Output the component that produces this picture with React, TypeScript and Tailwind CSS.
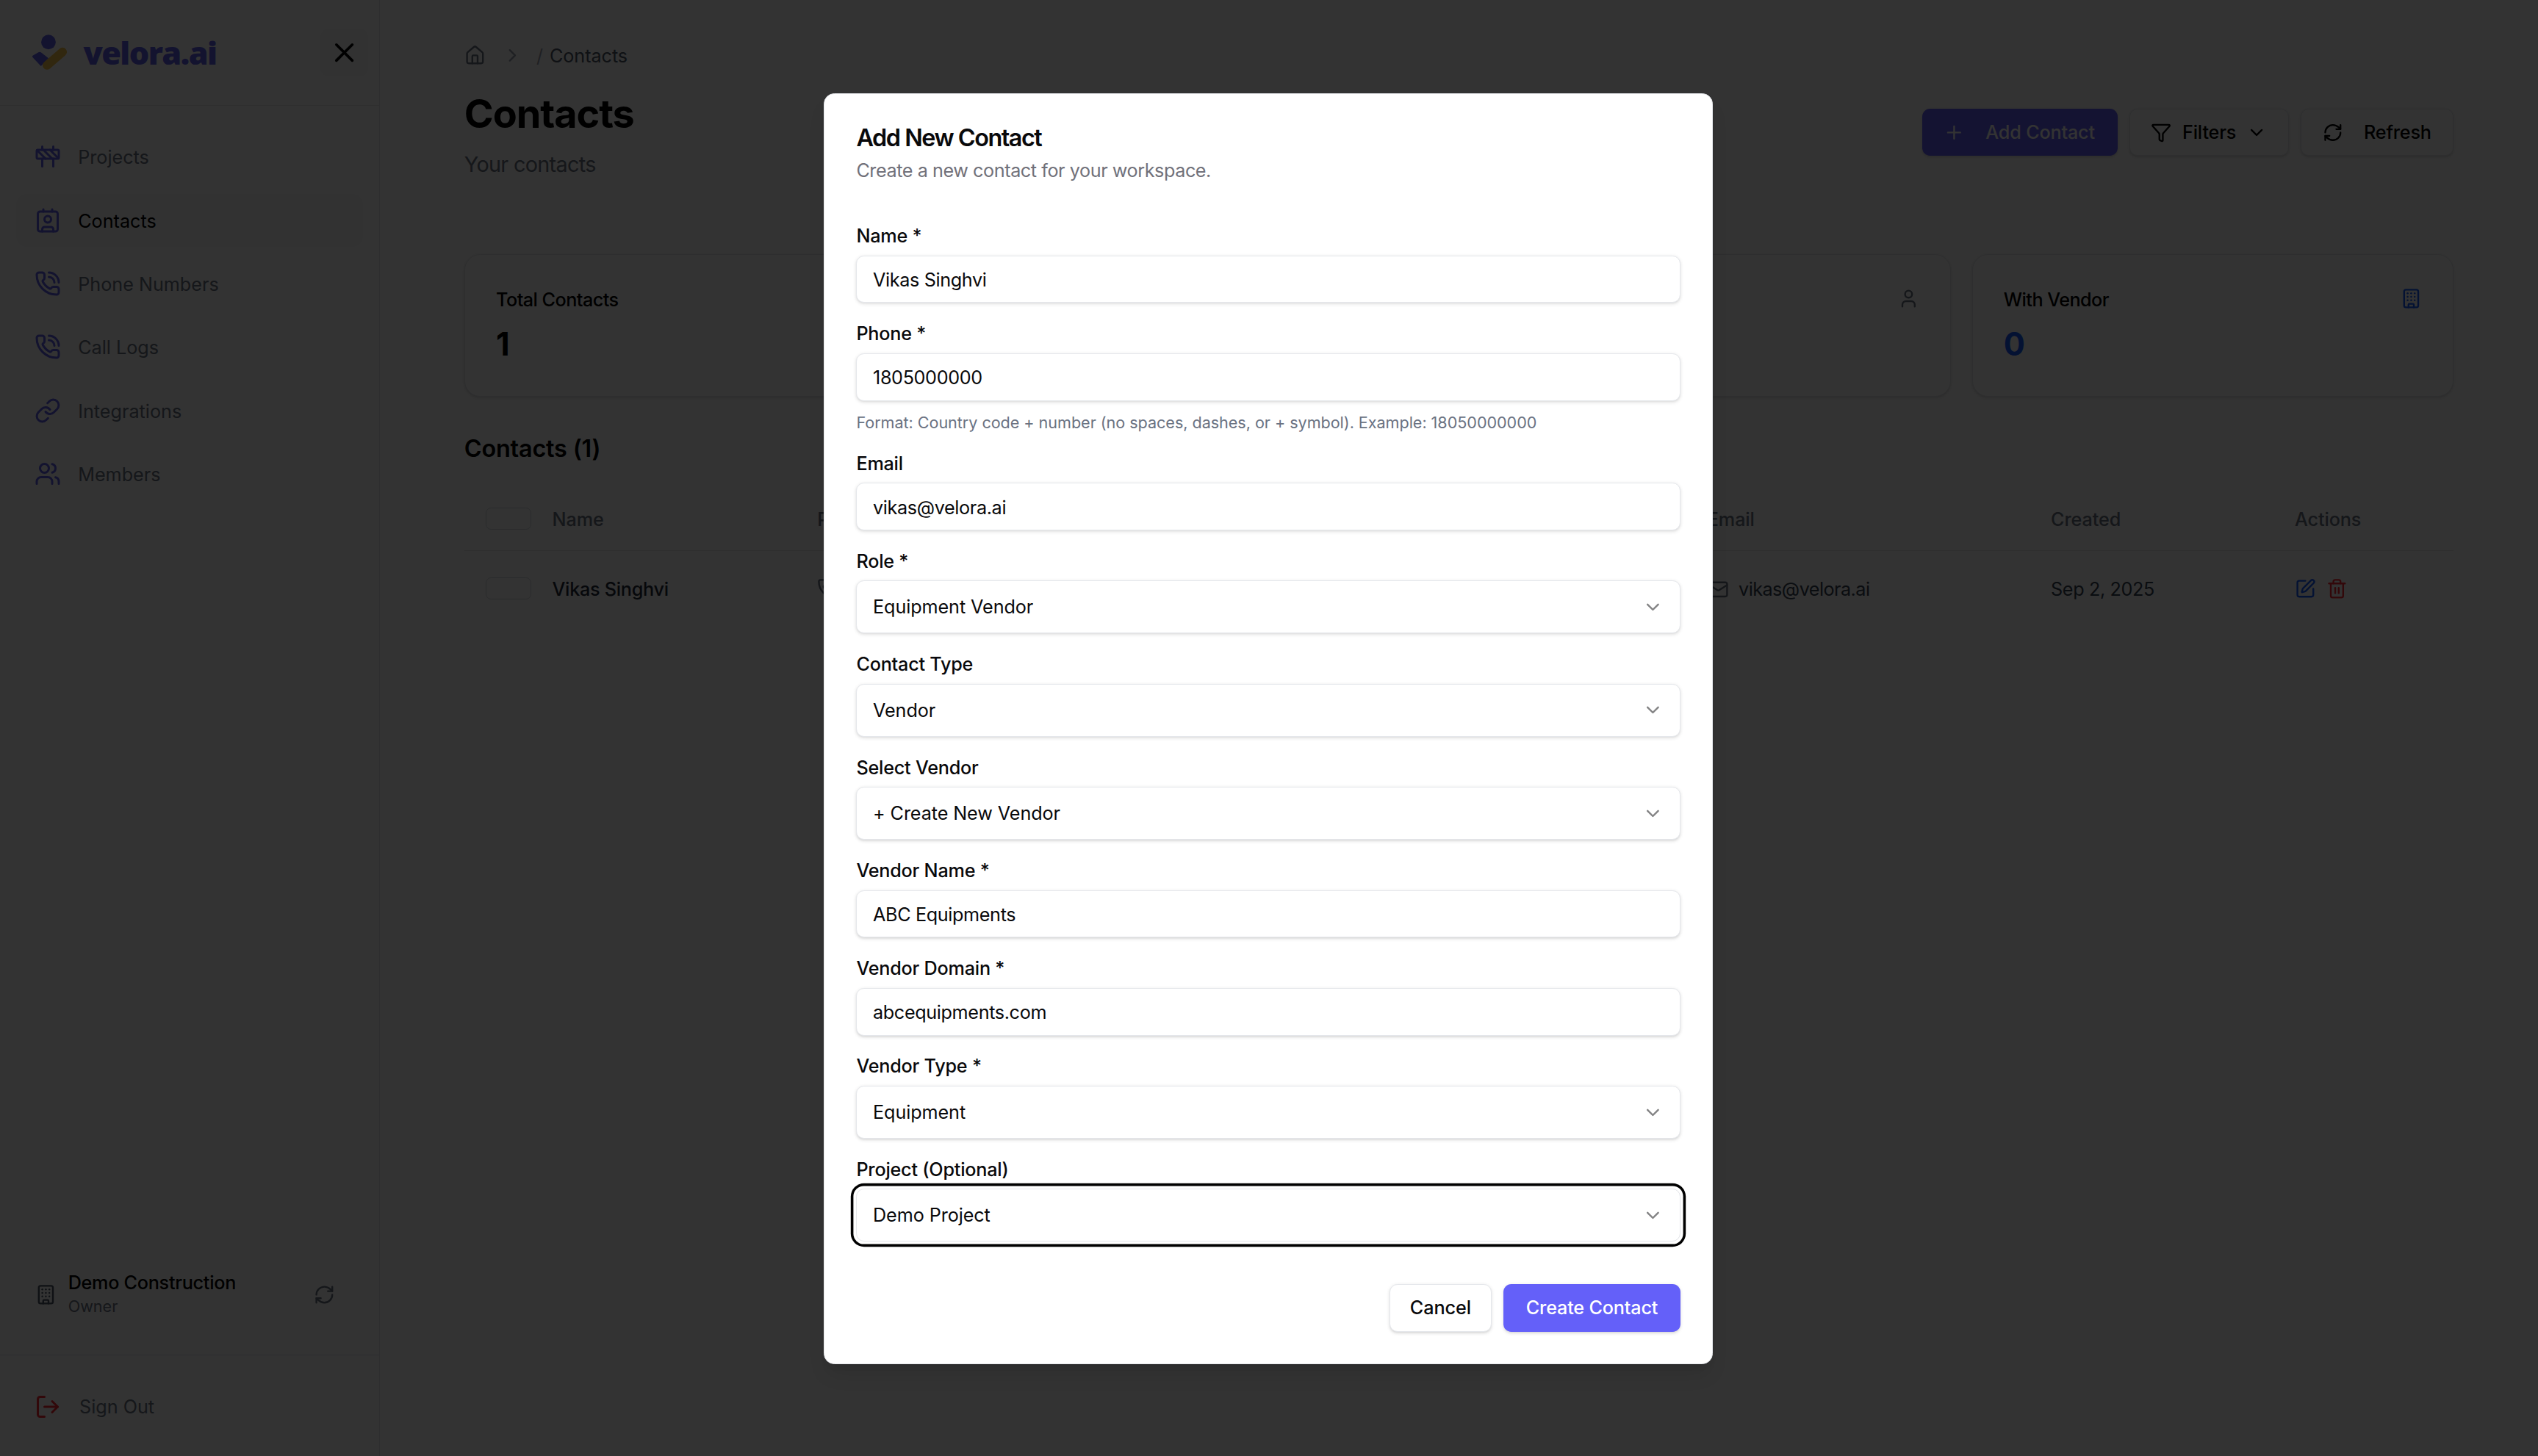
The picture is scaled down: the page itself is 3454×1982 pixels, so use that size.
import React from "react";
import {
  X, Construction, Contact, PhoneCall, Link, Users, Building, RefreshCw, LogOut, Home,
  ChevronRight, ChevronDown, Plus, Funnel, User, Phone, Mail, SquarePen, Trash2,
} from "lucide-react";

const nav = [
  { label: "Projects", Icon: Construction },
  { label: "Contacts", Icon: Contact, active: true },
  { label: "Phone Numbers", Icon: PhoneCall },
  { label: "Call Logs", Icon: PhoneCall },
  { label: "Integrations", Icon: Link },
  { label: "Members", Icon: Users },
];

function Logo() {
  return (
    <svg viewBox="72 80 157 150" className="w-[29px] h-[27.5px] shrink-0">
      <circle cx="141" cy="111" r="30" fill="#5f5fe8" />
      <path d="M75 173 Q72 170 77 166 L101 153 Q106 151 111 154 L141 178 L110 210 Z" fill="#5f5fe8" />
      <path d="M135 207 L199 152" stroke="#f5c04a" strokeWidth="36" strokeLinecap="round" fill="none" />
    </svg>
  );
}

function Sidebar() {
  return (
    <aside className="w-[287px] h-full shrink-0 border-r border-gray-200 flex flex-col">
      <div className="h-20 shrink-0 border-b border-gray-200 flex items-center justify-between pl-6 pr-2">
        <div className="flex items-center gap-[10px]">
          <Logo />
          <span className="text-[24px] font-extrabold leading-none tracking-[-0.87px] text-[#5f5fe8] [font-family:'Open_Sans',sans-serif]">velora.ai</span>
        </div>
        <button className="w-9 h-9 rounded-md bg-gray-50 flex items-center justify-center text-black">
          <X size={24} strokeWidth={2} />
        </button>
      </div>
      <nav className="flex flex-col gap-2 px-3 pt-[18.5px]">
        {nav.map(({ label, Icon, active }) => (
          <div key={label} className={`h-10 rounded-lg px-3.5 flex items-center gap-[13px] text-sm ${active ? "bg-gray-50 text-black" : "text-gray-500"}`}>
            <Icon size={20} className="text-[#5f5fe8] shrink-0" />
            <span className="pt-[1px]">{label}</span>
          </div>
        ))}
      </nav>
      <div className="mt-auto">
        <div className="flex items-center pl-[26.5px] pr-[33px] pb-[27.3px]">
          <Building size={16} className="text-gray-600 shrink-0" />
          <div className="ml-[9px] flex-1">
            <div className="text-sm leading-[18px] font-medium tracking-[-0.15px] text-black">Demo Construction</div>
            <div className="text-xs leading-[18px] text-gray-500">Owner</div>
          </div>
          <RefreshCw size={16} className="text-gray-500 shrink-0" />
        </div>
        <div className="border-t border-gray-200 px-3 pt-[19px] pb-[17px]">
          <div className="h-10 px-3.5 flex items-center gap-3.5 text-sm text-gray-500">
            <LogOut size={20} className="text-red-500 shrink-0" />
            <span>Sign Out</span>
          </div>
        </div>
      </div>
    </aside>
  );
}

function StatCard({ label, value, icon, valueClass }: { label: string; value: string; icon?: React.ReactNode; valueClass: string }) {
  return (
    <div className="rounded-xl border border-gray-200 bg-white shadow-sm px-[23.5px] py-[23px]">
      <div className="flex items-center justify-between h-5">
        <span className="text-sm font-medium tracking-[-0.3px] text-black pt-[1px]">{label}</span>
        {icon}
      </div>
      <div className={`mt-[8.5px] text-2xl leading-8 font-bold ${valueClass}`}>{value}</div>
    </div>
  );
}

const cols = "grid grid-cols-[50.5px_200.5px_673px_259.6px_184.4px_1fr] items-center";

function Checkbox() {
  return <div className="w-[34.5px] h-[17px] rounded-[4px] border border-gray-300" />;
}

function Main() {
  return (
    <main className="flex-1 min-w-0 px-16 pt-[32px]">
      <div className="flex items-center h-5 text-sm text-gray-600">
        <Home size={16} className="text-gray-500" />
        <ChevronRight size={16} className="ml-[12.5px] text-gray-400" />
        <span className="ml-[10px] text-gray-400">/</span>
        <span className="ml-[5px] tracking-[-0.03px]">Contacts</span>
      </div>
      <div className="flex items-start justify-between mt-[16.3px]">
        <div>
          <h1 className="text-3xl leading-9 font-bold tracking-[-0.6px] text-black">Contacts</h1>
          <p className="mt-2 text-base leading-6 tracking-[-0.38px] text-gray-500">Your contacts</p>
        </div>
        <div className="flex gap-[8.5px] mt-[13.7px]">
          <button className="h-9 w-[148px] px-4 rounded-md bg-[#6460f9] text-white text-sm font-medium tracking-[-0.1px] whitespace-nowrap flex items-center gap-4 shadow-sm">
            <Plus size={16} />
            <span>Add Contact</span>
          </button>
          <button className="h-9 w-[121px] px-4 rounded-md border border-gray-200 bg-white text-sm font-medium tracking-[-0.1px] text-black flex items-center gap-2 shadow-sm">
            <Funnel size={16} />
            <span>Filters</span>
            <ChevronDown size={16} />
          </button>
          <button className="h-9 w-[115.5px] px-4 rounded-md border border-gray-200 bg-white text-sm font-medium tracking-[-0.1px] text-black flex items-center gap-4 shadow-sm">
            <RefreshCw size={16} />
            <span>Refresh</span>
          </button>
        </div>
      </div>
      <div className="grid grid-cols-4 gap-4 mt-[56.2px]">
        <StatCard label="Total Contacts" value="1" valueClass="text-black" />
        <StatCard label="Active" value="1" valueClass="text-black" icon={<User size={16} className="text-gray-500" />} />
        <StatCard label="Owners" value="1" valueClass="text-black" icon={<User size={16} className="text-gray-500" />} />
        <StatCard label="With Vendor" value="0" valueClass="text-blue-600" icon={<Building size={16} className="text-blue-600" />} />
      </div>
      <h2 className="mt-[25.5px] text-lg leading-7 font-semibold tracking-[-0.1px] text-black">Contacts (1)</h2>
      <div className="mt-[15px]">
        <div className={`${cols} h-12 border-b border-gray-200 text-sm font-medium text-gray-500 tracking-[-0.05px]`}>
          <div className="pl-4"><Checkbox /></div>
          <div className="pl-4 pt-[1px]">Name</div>
          <div className="pl-4 pt-[1px]">Phone</div>
          <div className="pl-4 pt-[1px]">Email</div>
          <div className="pl-4 pt-[1px]">Created</div>
          <div className="pl-4 pt-[1px]">Actions</div>
        </div>
        <div className={`${cols} h-[57px] text-sm text-gray-700 tracking-[-0.1px]`}>
          <div className="pl-4"><Checkbox /></div>
          <div className="pl-4 pt-[1px] font-medium text-gray-800 tracking-[-0.15px]">Vikas Singhvi</div>
          <div className="pl-4 flex items-center gap-2"><Phone size={16} className="text-gray-500" />1805000000</div>
          <div className="pl-4 pt-[1px] flex items-center gap-[7.5px]"><Mail size={16} className="text-gray-500" /><span className="tracking-[-0.3px]">vikas@velora.ai</span></div>
          <div className="pl-4 pt-[1px] tracking-[-0.2px]">Sep 2, 2025</div>
          <div className="pl-4 flex items-center gap-2">
            <SquarePen size={16} className="text-blue-600" />
            <Trash2 size={16} className="text-red-500" />
          </div>
        </div>
      </div>
    </main>
  );
}

function Field({ label, children, hint }: { label: string; children: React.ReactNode; hint?: string }) {
  return (
    <div className="flex flex-col gap-2">
      <label className="text-sm leading-[14px] font-medium tracking-[-0.12px] text-[#09090b] relative top-[0.6px]">{label}</label>
      {children}
      {hint && <p className="text-xs leading-4 tracking-[-0.02px] text-gray-500 relative top-[0.6px]">{hint}</p>}
    </div>
  );
}

function TextInput({ value }: { value: string }) {
  return (
    <div className="h-9 px-3 flex items-center rounded-md border border-gray-200 bg-white shadow-sm text-sm tracking-[-0.2px] text-[#09090b]">
      <span className="relative top-[0.6px]">{value}</span>
    </div>
  );
}

function Select({ value, focused }: { value: string; focused?: boolean }) {
  return (
    <div className={`h-10 px-3 flex items-center justify-between rounded-md border border-gray-200 bg-white shadow-sm text-sm tracking-[-0.05px] text-[#09090b] ${focused ? "ring-2 ring-black ring-offset-2 ring-offset-white" : ""}`}>
      <span>{value}</span>
      <ChevronDown size={16} className="opacity-50" />
    </div>
  );
}

function Modal() {
  return (
    <div className="absolute inset-0 bg-black/80 flex items-center justify-center pt-[1.2px] pr-[1px]">
      <div className="w-[672px] rounded-lg border border-gray-200 bg-white shadow-lg p-6">
        <div className="flex flex-col gap-1.5">
          <h2 className="text-lg leading-[18px] font-semibold tracking-[-0.82px] text-[#09090b] relative top-[0.5px]">Add New Contact</h2>
          <p className="text-sm leading-5 tracking-[-0.24px] text-[#71717a]">Create a new contact for your workspace.</p>
        </div>
        <div className="flex flex-col gap-4 py-8">
          <Field label="Name *"><TextInput value="Vikas Singhvi" /></Field>
          <Field label="Phone *" hint="Format: Country code + number (no spaces, dashes, or + symbol). Example: 18050000000">
            <TextInput value="1805000000" />
          </Field>
          <Field label="Email"><TextInput value="vikas@velora.ai" /></Field>
          <Field label="Role *"><Select value="Equipment Vendor" /></Field>
          <Field label="Contact Type"><Select value="Vendor" /></Field>
          <Field label="Select Vendor"><Select value="+ Create New Vendor" /></Field>
          <Field label="Vendor Name *"><TextInput value="ABC Equipments" /></Field>
          <Field label="Vendor Domain *"><TextInput value="abcequipments.com" /></Field>
          <Field label="Vendor Type *"><Select value="Equipment" /></Field>
          <Field label="Project (Optional)"><Select value="Demo Project" focused /></Field>
        </div>
        <div className="flex justify-end gap-[9px]">
          <button className="h-9 w-[77.5px] rounded-md border border-gray-200 bg-white shadow-sm text-sm font-medium tracking-[-0.05px] text-[#09090b]">Cancel</button>
          <button className="h-9 w-[133.5px] rounded-md bg-[#6460f9] shadow-sm text-sm font-medium tracking-[-0.1px] text-white">Create Contact</button>
        </div>
      </div>
    </div>
  );
}

export default function App() {
  return (
    <div className="[zoom:1.8] relative w-[1918.8px] h-[1101px] overflow-hidden bg-white flex [font-family:Inter,sans-serif]">
      <Sidebar />
      <Main />
      <Modal />
    </div>
  );
}
